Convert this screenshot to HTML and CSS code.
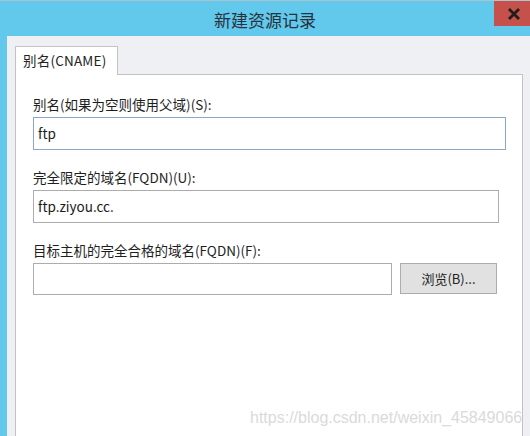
FILE: index.html
```html
<!DOCTYPE html>
<html lang="zh-CN">
<head>
<meta charset="utf-8">
<title>新建资源记录</title>
<link rel="stylesheet" href="styles.css">
</head>
<body>
<div class="window">
  <div class="titlebar">
    <div class="title">新建资源记录</div>
    <div class="close">
      <svg width="14" height="12" viewBox="0 0 14 12"><path d="M2 1 L12 11 M12 1 L2 11" stroke="#1e1e1e" stroke-width="2.8" fill="none"/></svg>
    </div>
  </div>
  <div class="client">
    <div class="tabs">
      <div class="tab">别名(CNAME)</div>
    </div>
    <div class="panel">
      <div class="field">
        <div class="label">别名(如果为空则使用父域)(S):</div>
        <div class="input focus w1">ftp</div>
      </div>
      <div class="field">
        <div class="label">完全限定的域名(FQDN)(U):</div>
        <div class="input w2">ftp.ziyou.cc.</div>
      </div>
      <div class="field">
        <div class="label">目标主机的完全合格的域名(FQDN)(F):</div>
        <div class="row">
          <div class="input w3"></div>
          <div class="button">浏览(B)...</div>
        </div>
      </div>
    </div>
  </div>
  <div class="watermark">https://blog.csdn.net/weixin_45849066</div>
</div>
</body>
</html>
```
FILE: styles.css
```css
html, body {
  margin: 0;
  padding: 0;
  width: 530px;
  height: 436px;
  overflow: hidden;
}
body {
  font-family: "Noto Sans CJK SC", "Noto Sans", sans-serif;
  color: #1b1b1b;
}
.window {
  position: relative;
  width: 530px;
  height: 436px;
  background: #62c8ec;
  display: flex;
  flex-direction: column;
}
.titlebar {
  height: 36px;
  flex: none;
  border-top: 1px solid #a9c4cf;
  box-sizing: border-box;
  display: flex;
  align-items: center;
  justify-content: center;
  position: relative;
}
.title {
  font-size: 17px;
  color: #26323c;
  margin-top: 2px;
}
.close {
  position: absolute;
  right: 0;
  top: 0;
  width: 36px;
  height: 25px;
  background: #c6504a;
  display: flex;
  align-items: center;
  justify-content: center;
}
.close svg { margin-left: 4px; }
.client {
  flex: 1;
  margin-left: 7px;
  background: #eff0f3;
  padding: 10px 7px 0 8px;
  display: flex;
  flex-direction: column;
}
.tabs {
  display: flex;
  height: 28px;
  flex: none;
}
.tab {
  width: 103px;
  box-sizing: border-box;
  border: 1px solid #c3c3c3;
  border-bottom: none;
  background: #ffffff;
  font-size: 13.5px;
  line-height: 26px;
  padding-left: 7px;
  height: 29px;
  position: relative;
  z-index: 1;
  color: #222;
  letter-spacing: 0.2px;
}
.panel {
  flex: 1;
  background: #ffffff;
  border: 1px solid #c3c3c3;
  border-bottom: none;
  padding: 20px 0 0 17px;
}
.field {
  margin-bottom: 18px;
}
.label {
  font-size: 13.5px;
  line-height: 18px;
  height: 18px;
  margin-bottom: 4px;
  color: #1e1e1e;
}
.input {
  height: 33px;
  box-sizing: border-box;
  border: 1px solid #acacac;
  background: #fff;
  font-size: 13.5px;
  line-height: 31px;
  padding-left: 4px;
  color: #1a1a1a;
}
.input.focus { border-color: #8aa8c6; }
.w1 { width: 473px; }
.w2 { width: 466px; }
.w3 { width: 359px; height: 32px; }
.row {
  display: flex;
  gap: 8px;
}
.button {
  width: 97px;
  height: 31px;
  box-sizing: border-box;
  border: 1px solid #acacac;
  background: #e1e1e1;
  font-size: 13px;
  line-height: 29px;
  text-align: center;
  color: #222;
}
.watermark {
  position: absolute;
  left: 250px;
  top: 409px;
  font-family: "Liberation Sans", Arial, sans-serif;
  font-size: 16px;
  color: #dadada;
}
```
